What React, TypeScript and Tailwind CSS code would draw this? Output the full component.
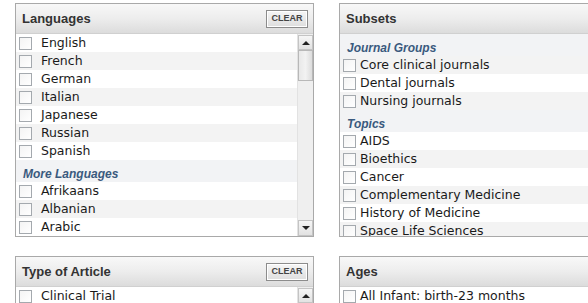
import React from 'react'

type Item = { label: string; heading?: boolean; white?: boolean }

const languages: Item[] = [
  { label: 'English', white: true },
  { label: 'French' },
  { label: 'German', white: true },
  { label: 'Italian' },
  { label: 'Japanese', white: true },
  { label: 'Russian' },
  { label: 'Spanish', white: true },
  { label: 'More Languages', heading: true },
  { label: 'Afrikaans', white: true },
  { label: 'Albanian' },
  { label: 'Arabic', white: true },
]

const subsets: Item[] = [
  { label: 'Journal Groups', heading: true },
  { label: 'Core clinical journals' },
  { label: 'Dental journals', white: true },
  { label: 'Nursing journals' },
  { label: 'Topics', heading: true },
  { label: 'AIDS', white: true },
  { label: 'Bioethics' },
  { label: 'Cancer', white: true },
  { label: 'Complementary Medicine' },
  { label: 'History of Medicine', white: true },
  { label: 'Space Life Sciences' },
]

const articleTypes: Item[] = [{ label: 'Clinical Trial', white: true }]
const ages: Item[] = [{ label: 'All Infant: birth-23 months', white: true }]

function Checkbox() {
  return (
    <span className="w-[13px] h-[13px] shrink-0 border border-[#a4a9ae] bg-gradient-to-br from-[#f4f4f4] to-white" />
  )
}

function ScrollBar() {
  return (
    <div className="w-[16px] shrink-0 flex flex-col bg-[#efefef] border-l border-[#e2e2e2]">
      <div className="h-[15px] mt-[1px] flex items-center justify-center border border-[#c4c4c4] bg-gradient-to-b from-[#f6f6f6] to-[#e2e2e2]">
        <span className="w-0 h-0 border-l-[4px] border-r-[4px] border-b-[4px] border-l-transparent border-r-transparent border-b-[#222]" />
      </div>
      <div className="h-[31px] border border-[#b8b8b8] bg-gradient-to-r from-[#e8e8e8] via-[#f2f2f2] to-[#dcdcdc]" />
      <div className="flex-1" />
      <div className="h-[16px] flex items-center justify-center border border-[#c4c4c4] bg-gradient-to-b from-[#f6f6f6] to-[#e2e2e2]">
        <span className="w-0 h-0 border-l-[4px] border-r-[4px] border-t-[4px] border-l-transparent border-r-transparent border-t-[#222]" />
      </div>
    </div>
  )
}

function Panel({
  title,
  items,
  clear,
  scroll,
  wide,
}: {
  title: string
  items: Item[]
  clear?: boolean
  scroll?: boolean
  wide?: boolean
}) {
  return (
    <div className="w-[299px] h-[234px] border border-[#a9a9a9] flex flex-col bg-white">
      <div className="h-[30px] shrink-0 flex items-center justify-between pl-[6px] pr-[5px] border-b border-[#d0d0d0] bg-gradient-to-b from-[#f8f8f8] via-[#ededed] to-[#dcdcdc]">
        <span className="text-[13px] font-bold text-[#333] font-['Liberation_Sans',Arial,sans-serif]">
          {title}
        </span>
        {clear && (
          <button className="w-[42px] h-[18px] border border-[#8c8c8c] shadow-[inset_0_0_0_1px_#ffffff] bg-gradient-to-b from-[#f6f6f6] to-[#dedede] text-[9px] font-bold text-[#444] leading-none font-['Liberation_Sans',Arial,sans-serif]">
            CLEAR
          </button>
        )}
      </div>
      <div className="flex-1 flex overflow-hidden bg-[#f2f3f5]">
        <div className="flex-1 flex flex-col">
          {items.map((it) =>
            it.heading ? (
              <div
                key={it.label}
                className="h-[22px] shrink-0 flex items-end pb-[1px] pl-[7px] text-[12px] font-bold italic text-[#3a5a7e] leading-[14px] font-['Liberation_Sans',Arial,sans-serif]"
              >
                {it.label}
              </div>
            ) : (
              <div
                key={it.label}
                className={`h-[18px] shrink-0 flex items-center pl-[3px] ${wide ? 'gap-[9px]' : 'gap-[4px]'} ${it.white ? 'bg-white' : 'bg-[#f3f3f3]'} text-[12.5px] text-[#1a1a1a] font-['DejaVu_Sans',Verdana,sans-serif] whitespace-nowrap`}
              >
                <Checkbox />
                <span>{it.label}</span>
              </div>
            )
          )}
        </div>
        {scroll && <ScrollBar />}
      </div>
    </div>
  )
}

export default function App() {
  return (
    <div className="w-[588px] h-[303px] overflow-hidden bg-white pt-[3px] pl-[15px]">
      <div className="grid grid-cols-[299px_299px] gap-x-[25px] gap-y-[19px]">
        <Panel title="Languages" items={languages} clear scroll wide />
        <Panel title="Subsets" items={subsets} />
        <Panel title="Type of Article" items={articleTypes} clear scroll wide />
        <Panel title="Ages" items={ages} />
      </div>
    </div>
  )
}
